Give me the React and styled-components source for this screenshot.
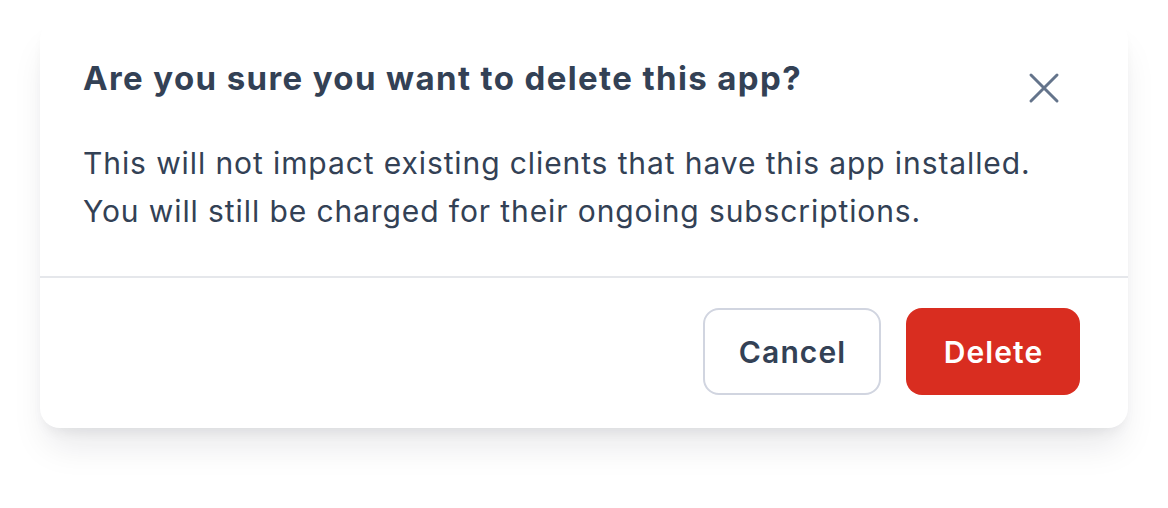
import React from "react";
import styled, { createGlobalStyle } from "styled-components";

const GlobalStyle = createGlobalStyle`
  * {
    box-sizing: border-box;
  }
  body {
    margin: 0;
    background: #ffffff;
    font-family: Inter, "Noto Sans", sans-serif;
    -webkit-font-smoothing: antialiased;
  }
`;

const CloseIcon = () => (
  <svg width="32" height="32" viewBox="0 0 32 32" fill="none">
    <path
      d="M3 3L29 29M29 3L3 29"
      stroke="#64748b"
      strokeWidth="3"
      strokeLinecap="round"
    />
  </svg>
);

const App = () => {
  return (
    <>
      <GlobalStyle />
      <Page>
        <Dialog>
          <Header>
            <TitleBlock>
              <Title>Are you sure you want to delete this app?</Title>
              <Message>
                This will not impact existing clients that have this app installed.
                <br />
                You will still be charged for their ongoing subscriptions.
              </Message>
            </TitleBlock>
            <CloseButton aria-label="Close">
              <CloseIcon />
            </CloseButton>
          </Header>
          <Footer>
            <Button>Cancel</Button>
            <Button $danger>Delete</Button>
          </Footer>
        </Dialog>
      </Page>
    </>
  );
};

export default App;

const Page = styled.div`
  min-height: 100vh;
  padding: 20px 40px 80px;
`;

const Dialog = styled.div`
  background: #ffffff;
  border-radius: 20px;
  box-shadow: 0 24px 36px -8px rgba(15, 23, 42, 0.1),
    0 8px 14px -6px rgba(15, 23, 42, 0.08);
  display: flex;
  flex-direction: column;
`;

const Header = styled.div`
  display: flex;
  justify-content: space-between;
  align-items: flex-start;
  padding: 38px 68px 41px 43px;
  border-bottom: 2px solid #e5e7eb;
`;

const TitleBlock = styled.div`
  flex: 1;
  min-width: 0;
  display: flex;
  flex-direction: column;
  gap: 41px;
`;

const Title = styled.h2`
  margin: 0;
  font-size: 33px;
  line-height: 40px;
  font-weight: 700;
  letter-spacing: 1.38px;
  color: #334155;
`;

const Message = styled.p`
  margin: 0;
  font-size: 30px;
  line-height: 48px;
  font-weight: 400;
  letter-spacing: 0.9px;
  white-space: nowrap;
  color: #334155;
`;

const CloseButton = styled.button`
  flex: none;
  border: none;
  background: none;
  padding: 0;
  margin-top: 14px;
  display: flex;
  cursor: pointer;
`;

const Footer = styled.div`
  display: flex;
  justify-content: flex-end;
  gap: 25px;
  padding: 30px 48px 33px;
`;

const Button = styled.button`
  height: 87px;
  width: ${(p) => (p.$danger ? "174px" : "178px")};
  padding: 0;
  border-radius: 16px;
  font-family: Inter, "Noto Sans", sans-serif;
  font-size: 30px;
  font-weight: 600;
  letter-spacing: 1.1px;
  text-indent: 1.1px;
  cursor: pointer;
  border: ${(p) => (p.$danger ? "none" : "2px solid #d1d5e0")};
  background: ${(p) => (p.$danger ? "#d92d20" : "#ffffff")};
  color: ${(p) => (p.$danger ? "#ffffff" : "#334155")};
`;
